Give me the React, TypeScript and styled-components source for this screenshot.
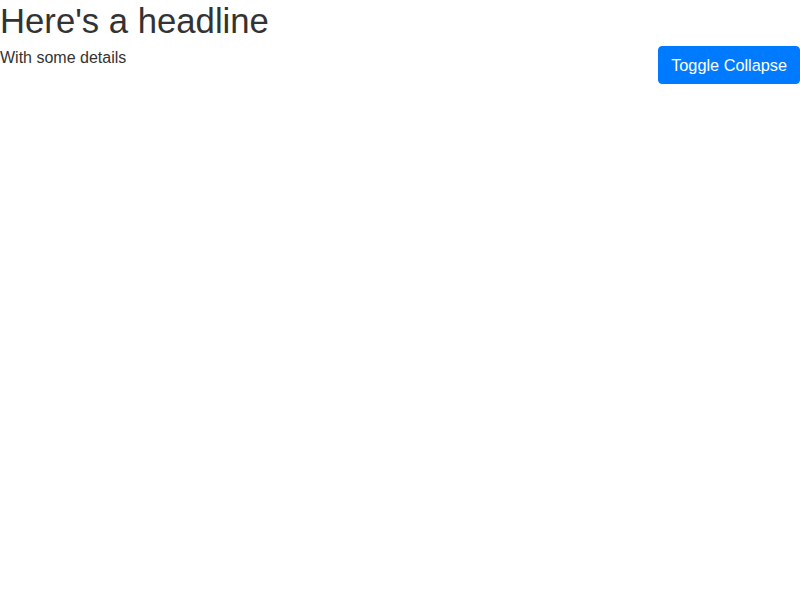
import React, { useState } from "react";
import styled, { createGlobalStyle } from "styled-components";

const GlobalStyle = createGlobalStyle`
  body {
    margin: 0;
    font-family: "Liberation Sans", Arial, sans-serif;
    font-size: 16px;
    line-height: 1.5;
    color: #333;
    background: #fff;
  }
`;

const Headline = styled.h1`
  margin: 0 0 4px;
  font-size: 34.7px;
  font-weight: 400;
  line-height: 42px;
`;

const Row = styled.div`
  display: flex;
  justify-content: space-between;
  align-items: flex-start;
`;

const Details = styled.p`
  margin: 0;
`;

const Button = styled.button`
  font-family: inherit;
  font-size: 16.3px;
  line-height: 24px;
  padding: 6px 12px;
  color: #fff;
  background: #007bff;
  border: 1px solid #007bff;
  border-radius: 4px;
  cursor: pointer;
`;

const Collapse = styled.div<{ $open: boolean }>`
  display: ${p => (p.$open ? "block" : "none")};
`;

const App = () => {
  const [open, setOpen] = useState(false);
  return (
    <>
      <GlobalStyle />
      <Headline>Here's a headline</Headline>
      <Row>
        <Details>With some details</Details>
        <Button onClick={() => setOpen(!open)}>Toggle Collapse</Button>
      </Row>
      <Collapse $open={open}>More content</Collapse>
    </>
  );
};

export default App;
